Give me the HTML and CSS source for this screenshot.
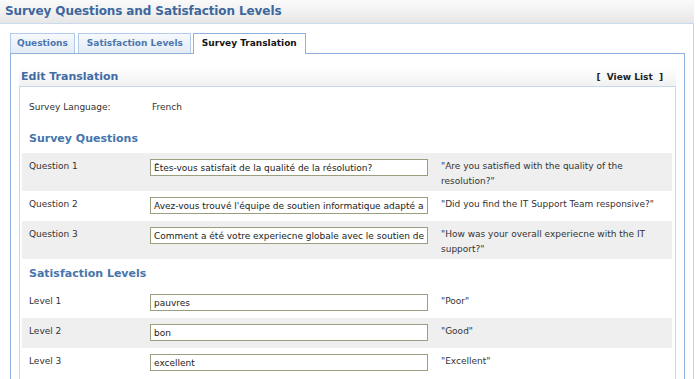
FILE: index.html
```html
<!DOCTYPE html>
<html>
<head>
<meta charset="utf-8">
<link rel="stylesheet" href="styles.css">
</head>
<body>
<div class="titlebar">Survey Questions and Satisfaction Levels</div>
<div class="outer">
  <div class="tabs">
    <div class="tab">Questions</div>
    <div class="tab wide">Satisfaction Levels</div>
    <div class="tab active">Survey Translation</div>
  </div>
  <div class="panel">
    <div class="edit-head">
      <span class="edit-title">Edit Translation</span>
      <span class="view-list">[ <b>View List</b> ]</span>
    </div>
    <div class="box">
      <div class="lang-row">
        <span>Survey Language:</span>
        <span class="lang-val">French</span>
      </div>
      <h2 class="section">Survey Questions</h2>
      <div class="row alt">
        <span>Question 1</span>
        <input class="field" type="text" value="Êtes-vous satisfait de la qualité de la résolution?">
        <span class="orig">"Are you satisfied with the quality of the resolution?"</span>
      </div>
      <div class="row">
        <span>Question 2</span>
        <input class="field" type="text" value="Avez-vous trouvé l'équipe de soutien informatique adapté aux besoins?">
        <span class="orig">"Did you find the IT Support Team responsive?"</span>
      </div>
      <div class="row alt">
        <span>Question 3</span>
        <input class="field" type="text" value="Comment a été votre experiecne globale avec le soutien de TI?">
        <span class="orig">"How was your overall experiecne with the IT support?"</span>
      </div>
      <h2 class="section second">Satisfaction Levels</h2>
      <div class="row">
        <span>Level 1</span>
        <input class="field" type="text" value="pauvres">
        <span class="orig">"Poor"</span>
      </div>
      <div class="row alt">
        <span>Level 2</span>
        <input class="field" type="text" value="bon">
        <span class="orig">"Good"</span>
      </div>
      <div class="row">
        <span>Level 3</span>
        <input class="field" type="text" value="excellent">
        <span class="orig">"Excellent"</span>
      </div>
    </div>
  </div>
</div>
</body>
</html>
```
FILE: styles.css
```css
* { box-sizing: border-box; }
html, body { margin: 0; padding: 0; background: #fff; }
body {
  font-family: "DejaVu Sans", Verdana, sans-serif;
  font-size: 9px;
  color: #333;
  width: 698px;
  height: 379px;
  overflow: hidden;
}
.titlebar {
  width: 694px;
  height: 24px;
  padding: 3px 0 0 5px;
  background: linear-gradient(#fafafa, #f3f3f3 40%, #e7e7e7);
  border-bottom: 1px solid #c9dcef;
  font-weight: bold;
  font-size: 12px;
  letter-spacing: -0.1px;
  line-height: 16px;
  color: #3d679d;
}
.outer {
  width: 694px;
  height: 360px;
  overflow: hidden;
  border-right: 1px solid #bcd3ee;
  padding: 9px 8px 0 10px;
}
.tabs {
  display: flex;
  align-items: flex-end;
  height: 20px;
  position: relative;
  z-index: 1;
}
.tab {
  height: 20px;
  padding: 0 6px;
  margin-right: 3px;
  border: 1px solid #b3cbe8;
  border-bottom: none;
  background: linear-gradient(#f6f9fd, #e4ecf6);
  font-weight: bold;
  color: #4b77ae;
  line-height: 19px;
}
.tab.wide { padding: 0 7px 0 8px; margin-right: 2px; }
.tab.active {
  height: 21px;
  margin-bottom: -1px;
  background: #fff;
  border-color: #8eb0dc;
  color: #151515;
  padding: 0 8px;
}
.panel {
  border: 1px solid #8eb0dc;
  border-bottom: none;
  height: 330px;
  padding: 13px 8px 0 8px;
}
.edit-head {
  display: flex;
  justify-content: space-between;
  align-items: center;
  height: 19px;
  padding: 0 13px 0 2px;
  background: linear-gradient(#fff, #f1f1f1);
}
.edit-title {
  font-weight: bold;
  font-size: 11px;
  color: #3f6ca4;
}
.view-list {
  font-weight: bold;
  color: #222;
  word-spacing: 3px;
}
.view-list b { word-spacing: 0; }
.box {
  border: 1px solid #c4d8ef;
  border-bottom: none;
  height: 300px;
  padding: 13px 3px 0 2px;
}
.lang-row {
  display: grid;
  grid-template-columns: 121px 1fr;
  padding: 0 7px;
  line-height: 15px;
}
.lang-val { padding-left: 2px; }
.section {
  margin: 15px 0 5px 7px;
  font-size: 11px;
  line-height: 18px;
  font-weight: bold;
  color: #4675ad;
}
.section.second { margin-top: 6px; }
.row {
  display: grid;
  grid-template-columns: 121px 291px 1fr;
  align-items: start;
  padding: 6px 7px 2px;
  line-height: 15px;
}
.row.alt { background: #efefef; }
.field {
  display: block;
  width: 278px;
  height: 17px;
  margin: 0 0 5px;
  padding: 0 3px;
  border: 1px solid #9c9e80;
  background: #fff;
  font-family: "DejaVu Sans", Verdana, sans-serif;
  font-size: 9px;
  color: #222;
  outline: none;
}
.orig { color: #333; }
```
